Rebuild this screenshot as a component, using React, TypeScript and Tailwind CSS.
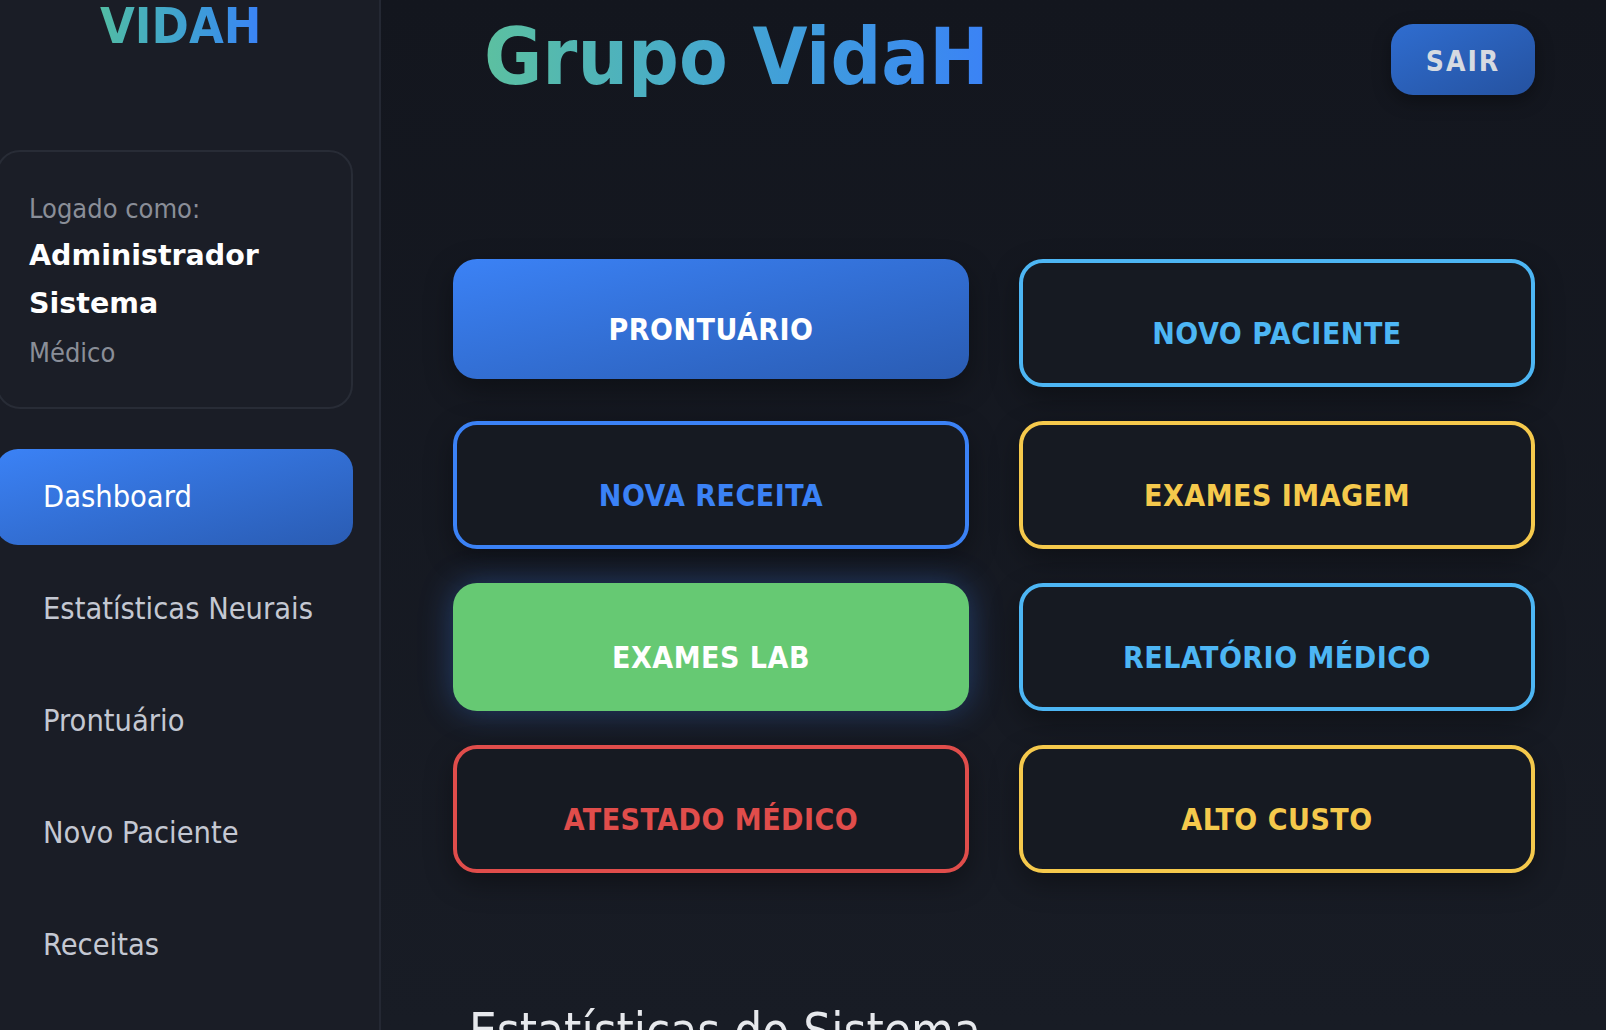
import { useState } from 'react';

const navItems = ['Dashboard', 'Estatísticas Neurais', 'Prontuário', 'Novo Paciente', 'Receitas'];

const outline = 'h-[128px] border-4 bg-[#161a22] shadow-[0_10px_28px_rgba(0,0,0,0.35)]';

const actions = [
  { label: 'PRONTUÁRIO', cls: 'h-[120px] bg-gradient-to-br from-[#3b82f6] to-[#2a5cb3] text-white shadow-[0_10px_28px_rgba(0,0,0,0.35)]' },
  { label: 'NOVO PACIENTE', cls: `${outline} border-[#4db6f4] text-[#4db6f4]` },
  { label: 'NOVA RECEITA', cls: `${outline} border-[#3b82f6] text-[#3b82f6]` },
  { label: 'EXAMES IMAGEM', cls: `${outline} border-[#f5c94c] text-[#f5c94c]` },
  { label: 'EXAMES LAB', cls: 'h-[128px] bg-[#66c973] text-white shadow-[0_0_32px_rgba(59,130,246,0.35)]' },
  { label: 'RELATÓRIO MÉDICO', cls: `${outline} border-[#4db6f4] text-[#4db6f4]` },
  { label: 'ATESTADO MÉDICO', cls: `${outline} border-[#e04d4b] text-[#e04d4b]` },
  { label: 'ALTO CUSTO', cls: `${outline} border-[#f5c94c] text-[#f5c94c]` },
];

export default function App() {
  const [active, setActive] = useState('Dashboard');

  return (
    <div className="flex h-screen w-full overflow-hidden bg-[#141820] [font-family:'DejaVu_Sans_Condensed','DejaVu_Sans',sans-serif] font-stretch-condensed">
      {/* Sidebar */}
      <aside className="w-[381px] shrink-0 overflow-hidden border-r-2 border-[#242833] bg-[#1a1d26]">
        <div className="-ml-[4px] w-[357px]">
          <div className="pl-[104px] pt-[1px]">
            <span className="bg-gradient-to-r from-[#52bca3] to-[#3b82f6] bg-clip-text text-[50px] font-bold leading-none text-transparent">
              VIDAH
            </span>
          </div>

          {/* User card */}
          <div className="mt-[99px] rounded-[24px] border-2 border-[#282c36] bg-[#1b1e27] pb-[29px] pl-[31px] pr-[20px] pt-[34px]">
            <div className="text-[27px] leading-[46px] text-[#8a8e98]">Logado como:</div>
            <div className="[font-family:'DejaVu_Sans',sans-serif] font-stretch-normal text-[28.5px] font-bold leading-[48px] text-white">
              Administrador Sistema
            </div>
            <div className="text-[27px] leading-[50px] text-[#8a8e98]">Médico</div>
          </div>

          {/* Nav */}
          <nav className="mt-[40px] flex flex-col gap-[16px]">
            {navItems.map(item => (
              <button
                key={item}
                onClick={() => setActive(item)}
                className={`flex h-[96px] items-center rounded-[22px] pl-[47px] text-left text-[30.5px] ${
                  active === item
                    ? 'bg-gradient-to-br from-[#3b82f6] to-[#2a5cb3] text-white'
                    : 'text-[#c4c8d2]'
                }`}
              >
                {item}
              </button>
            ))}
          </nav>
        </div>
      </aside>

      {/* Main */}
      <main className="flex-1 overflow-hidden bg-gradient-to-b from-[#13161e] to-[#181c25] pl-[72px] pr-[71px]">
        <header className="flex items-start justify-between">
          <h1 className="ml-[31px] mt-[18px] bg-gradient-to-r from-[#5cc0a0] via-[#44a5d2] to-[#3b82f6] bg-clip-text text-[79px] font-bold leading-none text-transparent">
            Grupo VidaH
          </h1>
          <button className="mt-[24px] flex h-[71px] w-[144px] items-center justify-center rounded-[22px] bg-gradient-to-br from-[#2f6dd0] to-[#2552a0] pt-[4px] text-[28px] font-bold tracking-[2px] text-[#d6dae1] shadow-[0_6px_18px_rgba(0,0,0,0.35)]">
            SAIR
          </button>
        </header>

        <div className="mt-[162px] grid grid-cols-2 items-start gap-x-[50px] gap-y-[34px]">
          {actions.map(a => (
            <button
              key={a.label}
              className={`flex w-full items-center justify-center rounded-[24px] pt-[20px] text-[30px] font-bold tracking-[0.5px] ${a.cls}`}
            >
              {a.label}
            </button>
          ))}
        </div>

        <h2 className="ml-[16px] mt-[134px] text-[49px] leading-none text-[#e6e8ec]">Estatísticas do Sistema</h2>
      </main>
    </div>
  );
}
